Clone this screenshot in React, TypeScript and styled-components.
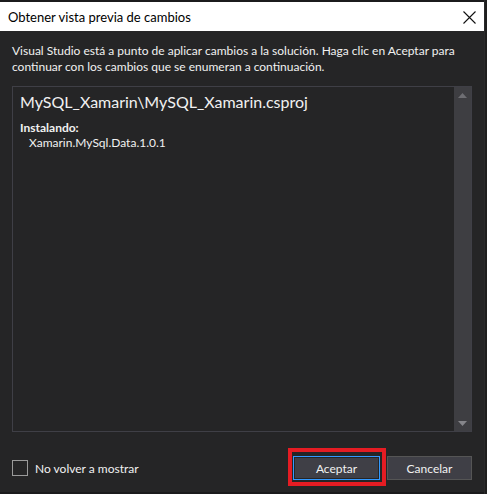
import React from 'react';
import styled, { createGlobalStyle } from 'styled-components';

const GlobalStyle = createGlobalStyle`
  html, body {
    margin: 0;
    padding: 0;
    background: #1b1b1c;
  }

  body {
    font-family: 'Segoe UI', Lato, 'Noto Sans', sans-serif;
    -webkit-font-smoothing: antialiased;
  }
`;

const Screen = styled.div`
  width: 487px;
  height: 494px;
  display: flex;
  overflow: hidden;
`;

const Dialog = styled.div`
  width: 484px;
  height: 490px;
  margin-top: 2px;
  display: flex;
  flex-direction: column;
  background: #252526;
`;

const Backdrop = styled.div`
  flex: 1;
  background: #1e1e1e;
  border-left: 1px solid #2a2a2b;
`;

const TitleBar = styled.div`
  height: 29px;
  flex: none;
  display: flex;
  align-items: center;
  justify-content: space-between;
  padding: 0 8px;
  background: #ffffff;
`;

const Title = styled.span`
  font-size: 13px;
  color: #000000;
`;

const CloseButton = styled.svg`
  width: 13px;
  height: 13px;
  margin-top: 2px;
`;

const Body = styled.div`
  flex: 1;
  display: flex;
  flex-direction: column;
  padding: 12px 12px 0;
`;

const Description = styled.p`
  margin: 0 0 11px;
  font-size: 12px;
  line-height: 16px;
  color: #f1f1f1;
`;

const Panel = styled.div`
  height: 346px;
  display: flex;
  border: 1px solid #3f3f46;
  box-sizing: border-box;
`;

const PanelContent = styled.div`
  flex: 1;
  padding: 5px 7px;
  color: #f1f1f1;
`;

const ProjectName = styled.div`
  font-size: 16px;
  line-height: 20px;
  margin-bottom: 8px;
`;

const SectionLabel = styled.div`
  font-size: 12px;
  font-weight: 700;
  line-height: 15px;
`;

const PackageName = styled.div`
  font-size: 12px;
  line-height: 15px;
  padding-left: 9px;
`;

const ScrollTrack = styled.div`
  width: 17px;
  display: flex;
  flex-direction: column;
  justify-content: space-between;
  align-items: center;
  padding: 6px 0 5px;
  background: #3e3e42;
`;

const Arrow = styled.svg<{ $tone: string }>`
  width: 9px;
  height: 5px;
  fill: ${(p) => p.$tone};
`;

const Footer = styled.div`
  display: flex;
  align-items: center;
  height: 24px;
  margin-top: 24px;
`;

const CheckRow = styled.label`
  display: flex;
  align-items: center;
  gap: 7px;
  flex: 1;
  font-size: 12px;
  color: #f1f1f1;
`;

const CheckBox = styled.span`
  width: 16px;
  height: 16px;
  box-sizing: border-box;
  border: 1px solid #9a9a9a;
  background: #252526;
`;

const Buttons = styled.div`
  display: flex;
  gap: 7px;
`;

const Button = styled.button<{ $primary?: boolean; $width: number }>`
  position: relative;
  width: ${(p) => p.$width}px;
  height: 24px;
  box-sizing: border-box;
  padding: 0;
  font-family: inherit;
  font-size: 12px;
  color: #f1f1f1;
  background: #3f3f46;
  border: 1px solid ${(p) => (p.$primary ? '#3399ff' : '#555555')};
  box-shadow: ${(p) => (p.$primary ? 'inset 0 0 0 1px #252526' : 'none')};
`;

// red highlight drawn around the default button
const Highlight = styled.span`
  position: absolute;
  top: -9px;
  left: -6px;
  right: -7px;
  bottom: -7px;
  border: 4px solid #e51c23;
  pointer-events: none;
`;

export default function App() {
  return (
    <>
      <GlobalStyle />
      <Screen>
        <Dialog>
          <TitleBar>
            <Title>Obtener vista previa de cambios</Title>
            <CloseButton viewBox="0 0 13 13">
              <path d="M0.5 0.5 L12.5 12.5 M12.5 0.5 L0.5 12.5" stroke="#111" strokeWidth="1.1" />
            </CloseButton>
          </TitleBar>
          <Body>
            <Description>
              Visual Studio está a punto de aplicar cambios a la solución. Haga clic en Aceptar para
              <br />
              continuar con los cambios que se enumeran a continuación.
            </Description>
            <Panel>
              <PanelContent>
                <ProjectName>MySQL_Xamarin\MySQL_Xamarin.csproj</ProjectName>
                <SectionLabel>Instalando:</SectionLabel>
                <PackageName>Xamarin.MySql.Data.1.0.1</PackageName>
              </PanelContent>
              <ScrollTrack>
                <Arrow $tone="#6e6e73" viewBox="0 0 9 5">
                  <polygon points="4.5,0 9,5 0,5" />
                </Arrow>
                <Arrow $tone="#85858a" viewBox="0 0 9 5">
                  <polygon points="0,0 9,0 4.5,5" />
                </Arrow>
              </ScrollTrack>
            </Panel>
            <Footer>
              <CheckRow>
                <CheckBox />
                No volver a mostrar
              </CheckRow>
              <Buttons>
                <Button $primary $width={87}>
                  Aceptar
                  <Highlight />
                </Button>
                <Button $width={85}>Cancelar</Button>
              </Buttons>
            </Footer>
          </Body>
        </Dialog>
        <Backdrop />
      </Screen>
    </>
  );
}
